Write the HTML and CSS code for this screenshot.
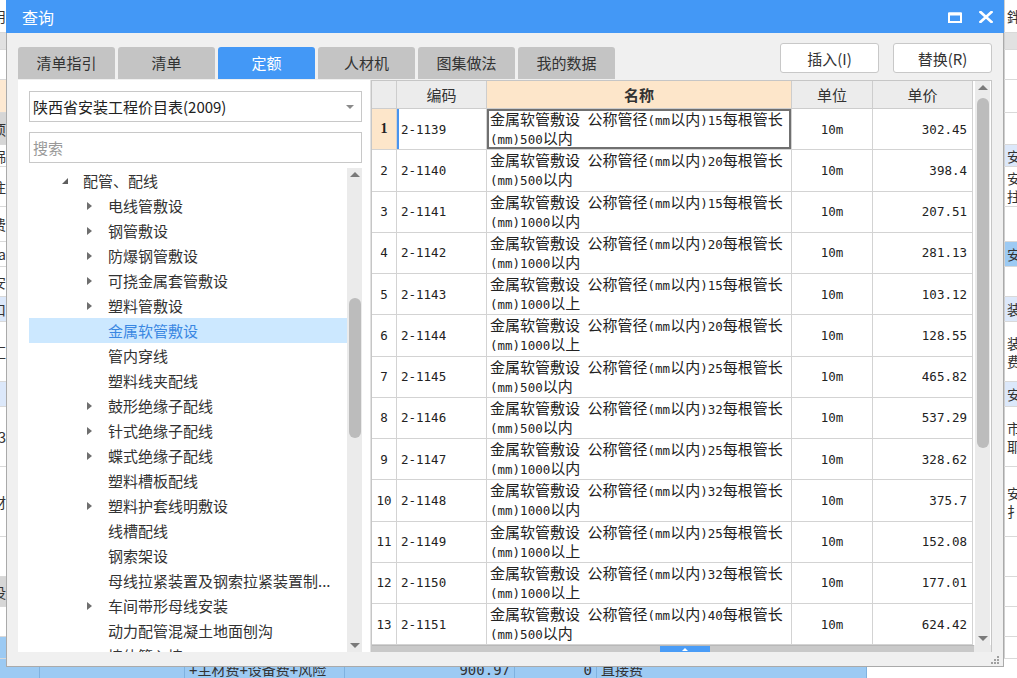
FILE: index.html
```html
<!DOCTYPE html>
<html lang="zh-CN">
<head>
<meta charset="utf-8">
<title>查询</title>
<link rel="stylesheet" href="styles.css">
</head>
<body>
<div class="app">
  <div class="arow h33"><div class="l">用</div><div class="m"></div><div class="r">鉡</div></div>
  <div class="arow h17 gray"><div class="l"></div><div class="m"></div><div class="r"></div></div>
  <div class="arow h30"><div class="l"></div><div class="m"></div><div class="r"></div></div>
  <div class="arow h33 lor"><div class="l"></div><div class="m"></div><div class="r"></div></div>
  <div class="arow h32"><div class="l g">项</div><div class="m"></div><div class="r"></div></div>
  <div class="arow h22"><div class="l">铞</div><div class="m"></div><div class="r lb">安</div></div>
  <div class="arow h40"><div class="l">注</div><div class="m"></div><div class="r two">安<br>拄</div></div>
  <div class="arow h35"><div class="l">费</div><div class="m"></div><div class="r"></div></div>
  <div class="arow h25"><div class="l">a</div><div class="m"></div><div class="r b">安</div></div>
  <div class="arow h30"><div class="l">安</div><div class="m"></div><div class="r"></div></div>
  <div class="arow h25"><div class="l lb">口</div><div class="m"></div><div class="r lb">装</div></div>
  <div class="arow h60"><div class="l">汇</div><div class="m"></div><div class="r two">装<br>费</div></div>
  <div class="arow h25"><div class="l lb"></div><div class="m"></div><div class="r lb">安</div></div>
  <div class="arow h60"><div class="l">3</div><div class="m"></div><div class="r two">市<br>耶</div></div>
  <div class="arow h70"><div class="l">材</div><div class="m"></div><div class="r two">安<br>扌</div></div>
  <div class="arow h40"><div class="l"></div><div class="m"></div><div class="r"></div></div>
  <div class="arow h30"><div class="l g">没</div><div class="m"></div><div class="r"></div></div>
  <div class="arow h30"><div class="l"></div><div class="m"></div><div class="r"></div></div>
  <div class="arow h22"><div class="l b"></div><div class="m"></div><div class="r"></div></div>
  <div class="abot">
    <div class="bc w40"></div>
    <div class="bc w145"></div>
    <div class="bc w160">+主材费+设备费+风险</div>
    <div class="bc w170 num">900.97</div>
    <div class="bc w82 num">0</div>
    <div class="bc w270">直接费</div>
    <div class="bc rest"></div>
  </div>
</div>

<div class="dialog">
  <div class="titlebar">
    <span class="title">查询</span>
    <div class="winbtns">
      <svg class="ic-max" width="14" height="11" viewBox="0 0 14 11"><rect x="1" y="1.5" width="12" height="8.5" fill="none" stroke="#fff" stroke-width="2"/><rect x="1" y="0.5" width="12" height="3" fill="#fff"/></svg>
      <svg class="ic-close" width="14" height="12" viewBox="0 0 14 12"><path d="M1.5 1 L12.5 11 M12.5 1 L1.5 11" stroke="#fff" stroke-width="2.6" stroke-linecap="square"/></svg>
    </div>
  </div>
  <div class="dbody">
    <div class="toprow">
      <div class="tabs">
        <div class="tab">清单指引</div>
        <div class="tab">清单</div>
        <div class="tab active">定额</div>
        <div class="tab">人材机</div>
        <div class="tab">图集做法</div>
        <div class="tab">我的数据</div>
      </div>
      <div class="actions">
        <button class="btn">插入(I)</button>
        <button class="btn">替换(R)</button>
      </div>
    </div>
    <div class="main">
      <div class="leftpanel">
        <div class="select"><span>陕西省安装工程价目表(2009)</span><span class="dd"></span></div>
        <div class="search">搜索</div>
        <div class="treewrap">
          <div class="tree">
            <div class="ti lv1"><span class="ar"><i class="caret-d"></i></span>配管、配线</div>
            <div class="ti lv2"><span class="ar"><i class="caret-r"></i></span>电线管敷设</div>
            <div class="ti lv2"><span class="ar"><i class="caret-r"></i></span>钢管敷设</div>
            <div class="ti lv2"><span class="ar"><i class="caret-r"></i></span>防爆钢管敷设</div>
            <div class="ti lv2"><span class="ar"><i class="caret-r"></i></span>可挠金属套管敷设</div>
            <div class="ti lv2"><span class="ar"><i class="caret-r"></i></span>塑料管敷设</div>
            <div class="ti lv2 on"><span class="ar"></span>金属软管敷设</div>
            <div class="ti lv2"><span class="ar"></span>管内穿线</div>
            <div class="ti lv2"><span class="ar"></span>塑料线夹配线</div>
            <div class="ti lv2"><span class="ar"><i class="caret-r"></i></span>鼓形绝缘子配线</div>
            <div class="ti lv2"><span class="ar"><i class="caret-r"></i></span>针式绝缘子配线</div>
            <div class="ti lv2"><span class="ar"><i class="caret-r"></i></span>蝶式绝缘子配线</div>
            <div class="ti lv2"><span class="ar"></span>塑料槽板配线</div>
            <div class="ti lv2"><span class="ar"><i class="caret-r"></i></span>塑料护套线明敷设</div>
            <div class="ti lv2"><span class="ar"></span>线槽配线</div>
            <div class="ti lv2"><span class="ar"></span>钢索架设</div>
            <div class="ti lv2"><span class="ar"></span>母线拉紧装置及钢索拉紧装置制...</div>
            <div class="ti lv2"><span class="ar"><i class="caret-r"></i></span>车间带形母线安装</div>
            <div class="ti lv2"><span class="ar"></span>动力配管混凝土地面刨沟</div>
            <div class="ti lv2"><span class="ar"></span>墙体管入墙</div>
          </div>
          <div class="vscroll tree-sb">
            <i class="up"></i>
            <div class="thumb-area"><div class="thumb t-tree"></div></div>
            <i class="down"></i>
          </div>
        </div>
      </div>
      <div class="grid">
        <div class="gbody">
          <div class="gcols">
            <div class="row head">
              <div class="c n"></div>
              <div class="c code">编码</div>
              <div class="c name cur">名称</div>
              <div class="c unit">单位</div>
              <div class="c price">单价</div>
            </div>
            <div class="row first">
              <div class="c n">1</div><div class="c code">2-1139</div>
              <div class="c name"><div>金属软管敷设<span class="l"> </span>公称管径<span class="l">(mm</span>以内<span class="l">)15</span>每根管长</div><div><span class="l">(mm)500</span>以内</div></div>
              <div class="c unit">10m</div><div class="c price">302.45</div>
            </div>
            <div class="row">
              <div class="c n">2</div><div class="c code">2-1140</div>
              <div class="c name"><div>金属软管敷设<span class="l"> </span>公称管径<span class="l">(mm</span>以内<span class="l">)20</span>每根管长</div><div><span class="l">(mm)500</span>以内</div></div>
              <div class="c unit">10m</div><div class="c price">398.4</div>
            </div>
            <div class="row">
              <div class="c n">3</div><div class="c code">2-1141</div>
              <div class="c name"><div>金属软管敷设<span class="l"> </span>公称管径<span class="l">(mm</span>以内<span class="l">)15</span>每根管长</div><div><span class="l">(mm)1000</span>以内</div></div>
              <div class="c unit">10m</div><div class="c price">207.51</div>
            </div>
            <div class="row">
              <div class="c n">4</div><div class="c code">2-1142</div>
              <div class="c name"><div>金属软管敷设<span class="l"> </span>公称管径<span class="l">(mm</span>以内<span class="l">)20</span>每根管长</div><div><span class="l">(mm)1000</span>以内</div></div>
              <div class="c unit">10m</div><div class="c price">281.13</div>
            </div>
            <div class="row">
              <div class="c n">5</div><div class="c code">2-1143</div>
              <div class="c name"><div>金属软管敷设<span class="l"> </span>公称管径<span class="l">(mm</span>以内<span class="l">)15</span>每根管长</div><div><span class="l">(mm)1000</span>以上</div></div>
              <div class="c unit">10m</div><div class="c price">103.12</div>
            </div>
            <div class="row">
              <div class="c n">6</div><div class="c code">2-1144</div>
              <div class="c name"><div>金属软管敷设<span class="l"> </span>公称管径<span class="l">(mm</span>以内<span class="l">)20</span>每根管长</div><div><span class="l">(mm)1000</span>以上</div></div>
              <div class="c unit">10m</div><div class="c price">128.55</div>
            </div>
            <div class="row">
              <div class="c n">7</div><div class="c code">2-1145</div>
              <div class="c name"><div>金属软管敷设<span class="l"> </span>公称管径<span class="l">(mm</span>以内<span class="l">)25</span>每根管长</div><div><span class="l">(mm)500</span>以内</div></div>
              <div class="c unit">10m</div><div class="c price">465.82</div>
            </div>
            <div class="row">
              <div class="c n">8</div><div class="c code">2-1146</div>
              <div class="c name"><div>金属软管敷设<span class="l"> </span>公称管径<span class="l">(mm</span>以内<span class="l">)32</span>每根管长</div><div><span class="l">(mm)500</span>以内</div></div>
              <div class="c unit">10m</div><div class="c price">537.29</div>
            </div>
            <div class="row">
              <div class="c n">9</div><div class="c code">2-1147</div>
              <div class="c name"><div>金属软管敷设<span class="l"> </span>公称管径<span class="l">(mm</span>以内<span class="l">)25</span>每根管长</div><div><span class="l">(mm)1000</span>以内</div></div>
              <div class="c unit">10m</div><div class="c price">328.62</div>
            </div>
            <div class="row">
              <div class="c n">10</div><div class="c code">2-1148</div>
              <div class="c name"><div>金属软管敷设<span class="l"> </span>公称管径<span class="l">(mm</span>以内<span class="l">)32</span>每根管长</div><div><span class="l">(mm)1000</span>以内</div></div>
              <div class="c unit">10m</div><div class="c price">375.7</div>
            </div>
            <div class="row">
              <div class="c n">11</div><div class="c code">2-1149</div>
              <div class="c name"><div>金属软管敷设<span class="l"> </span>公称管径<span class="l">(mm</span>以内<span class="l">)25</span>每根管长</div><div><span class="l">(mm)1000</span>以上</div></div>
              <div class="c unit">10m</div><div class="c price">152.08</div>
            </div>
            <div class="row">
              <div class="c n">12</div><div class="c code">2-1150</div>
              <div class="c name"><div>金属软管敷设<span class="l"> </span>公称管径<span class="l">(mm</span>以内<span class="l">)32</span>每根管长</div><div><span class="l">(mm)1000</span>以上</div></div>
              <div class="c unit">10m</div><div class="c price">177.01</div>
            </div>
            <div class="row">
              <div class="c n">13</div><div class="c code">2-1151</div>
              <div class="c name"><div>金属软管敷设<span class="l"> </span>公称管径<span class="l">(mm</span>以内<span class="l">)40</span>每根管长</div><div><span class="l">(mm)500</span>以内</div></div>
              <div class="c unit">10m</div><div class="c price">624.42</div>
            </div>
          </div>
          <div class="vscroll grid-sb">
            <i class="up"></i>
            <div class="thumb-area"><div class="thumb t-grid"></div></div>
            <i class="down"></i>
          </div>
        </div>
        <div class="hscroll">
          <div class="hbar"><div class="hmark"><i></i></div></div>
          <div class="hcorner"></div>
        </div>
      </div>
    </div>
    <div class="footer">
      <svg class="grip" width="9" height="9" viewBox="0 0 9 9" fill="#a0a0a0"><rect x="7" y="1" width="2" height="2"/><rect x="4" y="4" width="2" height="2"/><rect x="7" y="4" width="2" height="2"/><rect x="1" y="7" width="2" height="2"/><rect x="4" y="7" width="2" height="2"/><rect x="7" y="7" width="2" height="2"/></svg>
    </div>
  </div>
</div>
</body>
</html>
```

FILE: styles.css
```css
* { box-sizing: border-box; margin: 0; padding: 0; }
html, body { width: 1017px; height: 678px; overflow: hidden; }
body {
  position: relative;
  font-family: "Noto Sans CJK SC", "Microsoft YaHei", sans-serif;
  color: #333;
  background: #fff;
}

/* ---------- background application ---------- */
.app { display: flex; flex-direction: column; height: 678px; font-size: 14px; }
.arow { display: flex; flex: none; border-bottom: 1px solid #d9d9d9; }
.arow .l { width: 6px; overflow: hidden; display: flex; justify-content: flex-end; align-items: center; white-space: nowrap; }
.arow .m { flex: 1; }
.arow .r { width: 13px; overflow: hidden; display: flex; align-items: center; padding-left: 2px; white-space: nowrap; border-left: 1px solid #cfcfcf; }
.arow .two { line-height: 18px; flex-direction: column; justify-content: center; align-items: flex-start; }
.h17 { height: 17px; } .h22 { height: 22px; } .h25 { height: 25px; } .h30 { height: 30px; }
.h32 { height: 32px; } .h33 { height: 33px; } .h35 { height: 35px; } .h40 { height: 40px; }
.h60 { height: 60px; } .h70 { height: 70px; }
.gray .l, .gray .r { background: #e1e1e1; }
.lor .l { background: #fde9d2; }
.lb { background: #dce8fa; }
.b { background: #9ccaf3; }
.g { background: #d6d6d6; }
.abot { flex: 1; display: flex; line-height: 22px; font-size: 14px; }
.bc { background: #9ccaf3; border-right: 1px solid #7fb2e0; white-space: nowrap; overflow: hidden; padding: 0 4px; font-family: "DejaVu Sans Mono", "Noto Sans CJK SC", monospace; }
.bc.num { text-align: right; }
.w40 { width: 40px; } .w145 { width: 145px; } .w160 { width: 160px; } .w170 { width: 170px; }
.w82 { width: 82px; } .w270 { width: 270px; }
.bc.rest { flex: 1; background: #fff; border: none; }

/* ---------- dialog ---------- */
.dialog {
  position: absolute;
  left: 6px; top: 0;
  width: 998px; height: 667px;
  display: flex; flex-direction: column;
  background: #f0f0f0;
}
.titlebar {
  height: 33px; flex: none;
  background: #4398f6;
  display: flex; align-items: center; justify-content: space-between;
  padding: 0 11px 0 16px;
}
.title { color: #fff; font-size: 16px; line-height: 20px; }
.winbtns { display: flex; align-items: center; gap: 17px; padding-top: 1px; }
.ic-max { display: block; }
.ic-close { display: block; }

.dbody {
  flex: 1;
  display: flex; flex-direction: column;
  border: 1px solid #aaaaaa; border-top: none;
  padding: 0 11px;
}
.toprow { height: 46px; flex: none; display: flex; justify-content: space-between; }
.tabs { display: flex; align-items: flex-end; gap: 3px; }
.tab {
  width: 97px; height: 32px;
  background: #c4c4c4;
  border-radius: 3px 3px 0 0;
  font-size: 15px; line-height: 32px; text-align: center;
  color: #333;
}
.tab.active { background: #4398f6; color: #fff; }
.actions { display: flex; gap: 14px; padding-top: 10px; }
.btn {
  width: 99px; height: 30px;
  background: #fff;
  border: 1px solid #c8c8c8; border-radius: 3px;
  font-family: "Noto Sans CJK SC", sans-serif;
  font-size: 15px; color: #333;
}

.main { height: 573px; flex: none; display: flex; padding-top: 1px; }

/* ---------- left panel ---------- */
.leftpanel {
  width: 353px; flex: none;
  background: #fff;
  border-right: 1px solid #e2e2e2;
  padding: 11px 8px 0 11px;
  display: flex; flex-direction: column;
}
.select {
  height: 31px; flex: none;
  border: 1px solid #c8c8c8;
  display: flex; align-items: center; justify-content: space-between;
  padding: 0 7px 0 3px;
  font-size: 15px; color: #222;
}
.dd { width: 0; height: 0; border-left: 4px solid transparent; border-right: 4px solid transparent; border-top: 4px solid #8a8a8a; }
.search {
  height: 31px; flex: none; margin-top: 10px;
  border: 1px solid #c8c8c8;
  padding-left: 3px;
  font-size: 15px; line-height: 29px; color: #999;
}
.treewrap { flex: 1; margin-top: 5px; display: flex; overflow: hidden; }
.tree { flex: 1; overflow: hidden; }
.ti {
  height: 25px; display: flex; align-items: center;
  font-size: 15px; white-space: nowrap; color: #333;
}
.ti.lv1 { padding-left: 33px; }
.ti.lv2 { padding-left: 58px; }
.ti.on { background: #cce8ff; color: #3a87e2; }
.ar { width: 21px; flex: none; display: flex; align-items: center; }
.caret-r { display: block; width: 0; height: 0; border-left: 5px solid #6e6e6e; border-top: 4px solid transparent; border-bottom: 4px solid transparent; }
.caret-d { display: block; width: 0; height: 0; border-left: 6px solid transparent; border-bottom: 6px solid #5e5e5e; margin-top: 1px; }

/* scrollbars */
.vscroll { flex: none; display: flex; flex-direction: column; align-items: center; background: #ebebeb; }
.vscroll .up { display: block; width: 0; height: 0; border-left: 5px solid transparent; border-right: 5px solid transparent; border-bottom: 5px solid #7a7a7a; margin: 4px 0 3px; }
.vscroll .down { display: block; width: 0; height: 0; border-left: 5px solid transparent; border-right: 5px solid transparent; border-top: 5px solid #7a7a7a; margin: 3px 0 4px; }
.thumb-area { flex: 1; width: 100%; display: flex; flex-direction: column; align-items: center; }
.thumb { width: 12px; background: #bcbcbc; border-radius: 6px; }
.tree-sb { width: 15px; }
.t-tree { margin-top: 118px; height: 140px; }

/* ---------- grid ---------- */
.grid {
  flex: 1;
  display: flex; flex-direction: column;
  background: #fff;
  border-top: 1px solid #c6c6c6;
  border-left: 1px solid #c6c6c6;
  border-right: 1px solid #c6c6c6;
}
.gbody { flex: 1; display: flex; overflow: hidden; }
.gcols { width: 601px; flex: none; overflow: hidden; }
.grid-sb { width: 15px; margin: 0 1px 0 2px; }
.t-grid { margin-top: 5px; height: 350px; }

.row { display: flex; height: 41.25px; }
.row.head { height: 28px; background: #ececec; }
.c {
  flex: none;
  border-right: 1px solid #d3d3d3;
  border-bottom: 1px solid #d3d3d3;
  display: flex; align-items: center;
  font-family: "DejaVu Sans Mono", "Noto Sans CJK SC", monospace;
  font-size: 12.5px; color: #222;
  white-space: nowrap;
}
.c.n { width: 25px; justify-content: center; }
.c.code { width: 90px; padding-left: 4px; }
.c.name {
  width: 305px; padding-left: 3px;
  flex-direction: column; align-items: flex-start; justify-content: center;
  font-family: "Noto Sans CJK SC", sans-serif; font-size: 15px; line-height: 17px;
}
.c.name .l { font-family: "DejaVu Sans Mono", monospace; font-size: 12.5px; white-space: pre; }
.c.unit { width: 81px; justify-content: center; }
.c.price { width: 100px; justify-content: flex-end; padding-right: 5px; }

.head .c {
  font-family: "Noto Sans CJK SC", sans-serif; font-size: 15px;
  justify-content: center; align-items: center;
  padding: 0; color: #333; border-color: #cdcdcd;
}
.head .c.cur { background: #fde6ca; font-weight: bold; }

.first .c.n { background: #fde6ca; font-family: "Liberation Serif", serif; font-weight: bold; font-size: 14px; }
.first .c.code { box-shadow: inset 2px 0 0 #4a94ee; }
.first .c.name { box-shadow: inset 0 0 0 2px #707070; }

.hscroll { height: 7px; flex: none; display: flex; }
.hbar { flex: 1; background: #c9c9c9; border-top: 1px solid #b8b8b8; position: relative; }
.hmark { position: absolute; left: 288px; top: 0; width: 50px; height: 6px; background: #4a9cf6; display: flex; justify-content: center; align-items: center; }
.hmark i { display: block; width: 0; height: 0; border-left: 3px solid transparent; border-right: 3px solid transparent; border-bottom: 3px solid #fff; }
.hcorner { width: 17px; background: #ebebeb; }

.footer { flex: 1; position: relative; }
.grip { position: absolute; right: -7px; bottom: 2px; }
```
